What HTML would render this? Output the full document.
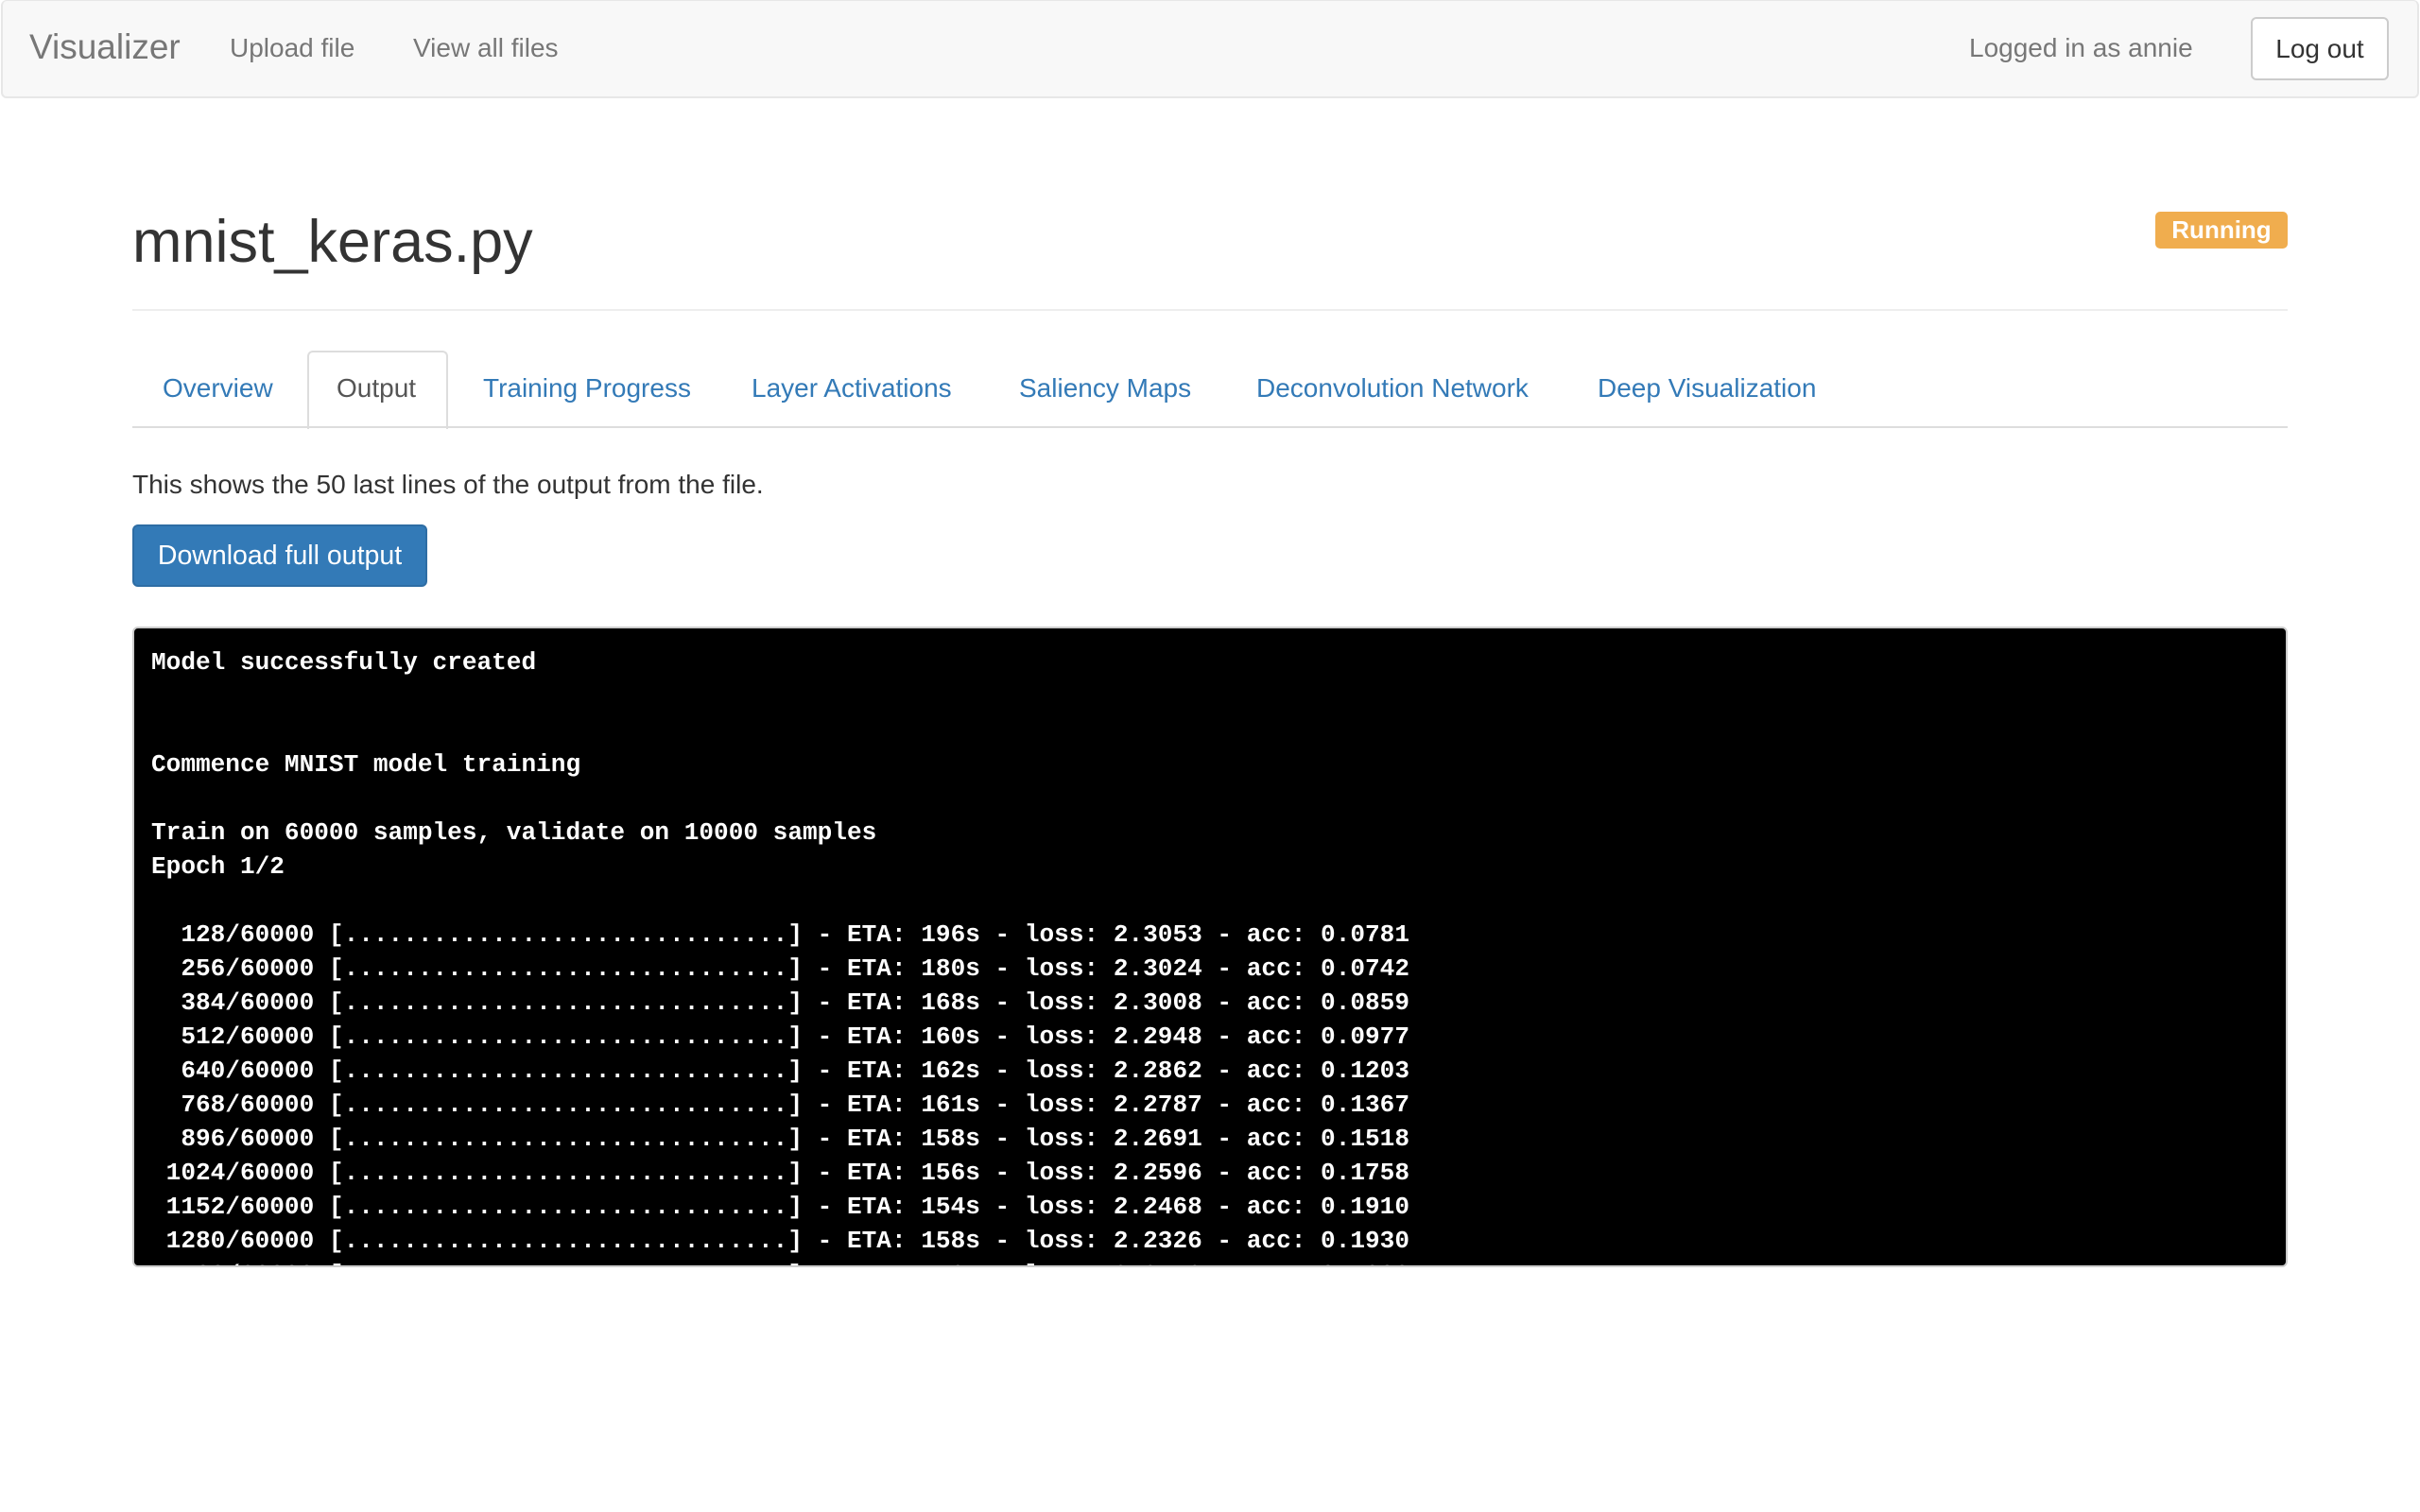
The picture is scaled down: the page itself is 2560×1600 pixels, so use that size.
<!DOCTYPE html>
<html><head><meta charset="utf-8"><style>
*{box-sizing:border-box;margin:0;padding:0}
body{width:2560px;height:1600px;background:#fff;font-family:"Liberation Sans",Arial,sans-serif;color:#333;position:relative;overflow:hidden}
.nav{position:absolute;left:1px;top:0;width:2558px;height:104px;background:#f8f8f8;border:2px solid #e7e7e7;border-top:1px solid #e7e7e7;border-radius:6px}
.a{position:absolute;white-space:nowrap}
.brand{left:31px;top:29px;font-size:37px;color:#777}
.nl{font-size:28px;color:#777;top:35px}
.logout{left:2381px;top:18px;width:146px;height:67px;background:#fff;border:2px solid #ccc;border-radius:6px;font-size:28px;color:#333;text-align:center;line-height:63px}
h1{position:absolute;left:140px;top:221px;font-size:63px;font-weight:normal;color:#333;line-height:70px}
.badge{left:2280px;top:224px;width:140px;height:39px;background:#f0ad4e;color:#fff;font-weight:bold;font-size:26px;border-radius:5px;text-align:center;line-height:39px}
.hr{position:absolute;left:140px;width:2280px;top:327px;height:2px;background:#eee}
.tabline{position:absolute;left:140px;width:2280px;top:451px;height:2px;background:#ddd}
.tab{font-size:28px;color:#337ab7;top:395px}
.active{position:absolute;left:325px;top:371px;width:149px;height:83px;background:#fff;border:2px solid #ddd;border-bottom:none;border-radius:6px 6px 0 0}
.p{left:140px;top:497px;font-size:28px;color:#333}
.btn{left:140px;top:555px;width:312px;height:66px;background:#337ab7;border:2px solid #2e6da4;border-radius:6px;color:#fff;font-size:28.5px;text-align:center;line-height:62px}
pre{position:absolute;left:140px;top:663px;width:2280px;height:678px;background:#000;border:2px solid #ccc;border-radius:6px;overflow:hidden;color:#fff;font-family:"Liberation Mono","DejaVu Sans Mono",monospace;font-weight:bold;font-size:26.1px;line-height:36px;padding:18px 18px}
</style></head><body>
<div class="nav"></div>
<div class="a brand">Visualizer</div>
<div class="a nl" style="left:243px">Upload file</div>
<div class="a nl" style="left:437px">View all files</div>
<div class="a nl" style="left:2083px">Logged in as annie</div>
<div class="a logout">Log out</div>
<h1>mnist_keras.py</h1>
<div class="a badge">Running</div>
<div class="hr"></div>
<div class="active"></div>
<div class="tabline"></div>
<div class="a tab" style="left:172px">Overview</div>
<div class="a tab" style="left:356px;color:#555">Output</div>
<div class="a tab" style="left:511px">Training Progress</div>
<div class="a tab" style="left:795px">Layer Activations</div>
<div class="a tab" style="left:1078px">Saliency Maps</div>
<div class="a tab" style="left:1329px">Deconvolution Network</div>
<div class="a tab" style="left:1690px">Deep Visualization</div>
<div class="a p">This shows the 50 last lines of the output from the file.</div>
<div class="a btn">Download full output</div>
<pre>Model successfully created


Commence MNIST model training

Train on 60000 samples, validate on 10000 samples
Epoch 1/2

  128/60000 [..............................] - ETA: 196s - loss: 2.3053 - acc: 0.0781
  256/60000 [..............................] - ETA: 180s - loss: 2.3024 - acc: 0.0742
  384/60000 [..............................] - ETA: 168s - loss: 2.3008 - acc: 0.0859
  512/60000 [..............................] - ETA: 160s - loss: 2.2948 - acc: 0.0977
  640/60000 [..............................] - ETA: 162s - loss: 2.2862 - acc: 0.1203
  768/60000 [..............................] - ETA: 161s - loss: 2.2787 - acc: 0.1367
  896/60000 [..............................] - ETA: 158s - loss: 2.2691 - acc: 0.1518
 1024/60000 [..............................] - ETA: 156s - loss: 2.2596 - acc: 0.1758
 1152/60000 [..............................] - ETA: 154s - loss: 2.2468 - acc: 0.1910
 1280/60000 [..............................] - ETA: 158s - loss: 2.2326 - acc: 0.1930
 1408/60000 [..............................] - ETA: 152s - loss: 2.2142 - acc: 0.1999
</pre>
</body></html>
